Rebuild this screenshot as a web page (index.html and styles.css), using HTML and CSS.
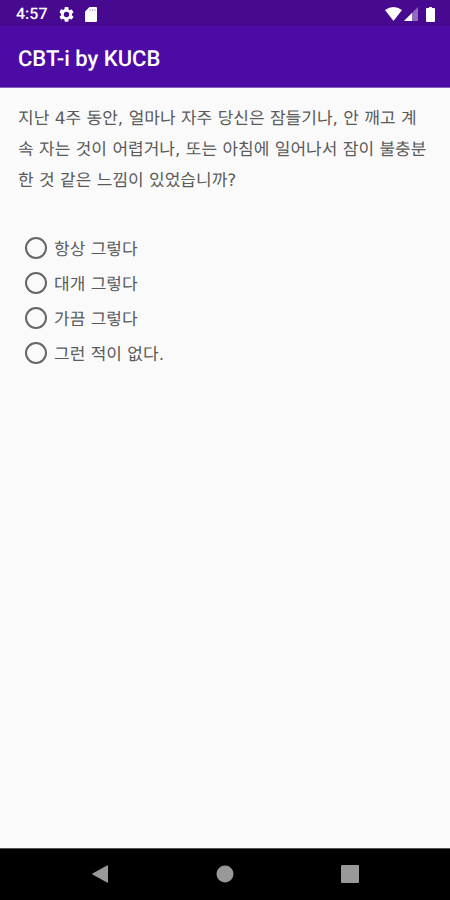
FILE: index.html
```html
<!DOCTYPE html>
<html lang="ko">
<head>
<meta charset="utf-8">
<meta name="viewport" content="width=device-width, initial-scale=1">
<title>CBT-i by KUCB</title>
<link rel="stylesheet" href="styles.css">
</head>
<body>
<div class="status">
  <time class="clock">4:57</time>
  <svg class="gear" viewBox="2 2 20 20" aria-hidden="true"><path d="M19.14 12.94c.04-.3.06-.61.06-.94s-.02-.64-.07-.94l2.03-1.58a.49.49 0 0 0 .12-.61l-1.92-3.32a.49.49 0 0 0-.59-.22l-2.39.96a7 7 0 0 0-1.62-.94l-.36-2.54A.48.48 0 0 0 13.92 2h-3.84a.48.48 0 0 0-.48.41l-.36 2.54c-.59.24-1.13.57-1.62.94l-2.39-.96a.48.48 0 0 0-.59.22L2.74 8.87a.48.48 0 0 0 .12.61l2.03 1.58a6 6 0 0 0 0 1.88l-2.03 1.58a.49.49 0 0 0-.12.61l1.92 3.32c.12.22.37.29.59.22l2.39-.96c.5.38 1.03.7 1.62.94l.36 2.54c.05.24.24.41.48.41h3.84c.24 0 .44-.17.47-.41l.36-2.54a7 7 0 0 0 1.62-.94l2.39.96c.22.08.47 0 .59-.22l1.92-3.32a.49.49 0 0 0-.12-.61zM12 15.6a3.6 3.6 0 1 1 0-7.2 3.6 3.6 0 0 1 0 7.2z"/></svg>
  <svg class="card" viewBox="0 0 12 15" aria-hidden="true"><path d="M4.500 0H11a1 1 0 0 1 1 1v13a1 1 0 0 1-1 1H1a1 1 0 0 1-1-1V4.500z"/><path class="slots" d="M5 2v2M7.500 2v2M10 2v2"/></svg>
  <span class="signals">
    <svg class="wifi" viewBox="0 0 17 14" aria-hidden="true"><path d="M0 3Q8.500-3 17 3L8.500 14z"/></svg>
    <svg class="cell" viewBox="0 0 14 14" aria-hidden="true"><path class="weak" d="M14 0v14H0z"/><path d="M8 6v8H0z"/></svg>
    <svg class="battery" viewBox="0 0 9 15" aria-hidden="true"><path d="M3 0h3v1h2a1 1 0 0 1 1 1V14a1 1 0 0 1-1 1H1a1 1 0 0 1-1-1V2a1 1 0 0 1 1-1h2z"/></svg>
  </span>
</div>
<header class="app-bar"><h1>CBT-i by KUCB</h1></header>
<main>
  <form>
    <fieldset>
      <legend>지난 4주 동안, 얼마나 자주 당신은 잠들기나, 안 깨고 계<br>속 자는 것이 어렵거나, 또는 아침에 일어나서 잠이 불충분<br>한 것 같은 느낌이 있었습니까?</legend>
      <div class="options">
        <label><input type="radio" name="frequency" value="always">항상 그렇다</label>
        <label><input type="radio" name="frequency" value="usually">대개 그렇다</label>
        <label><input type="radio" name="frequency" value="sometimes">가끔 그렇다</label>
        <label><input type="radio" name="frequency" value="never">그런 적이 없다.</label>
      </div>
    </fieldset>
  </form>
</main>
<nav class="system-nav">
  <button type="button" aria-label="뒤로"><svg viewBox="0 0 18 18" aria-hidden="true"><path d="M16 0.500q1-.5 1 .5v16q0 1-1 .5L1.500 9.500q-1-.5 0-1z"/></svg></button>
  <button type="button" aria-label="홈"><svg viewBox="0 0 18 18" aria-hidden="true"><circle cx="9" cy="9" r="8.500"/></svg></button>
  <button type="button" aria-label="최근 앱"><svg viewBox="0 0 18 18" aria-hidden="true"><rect width="18" height="18" rx="1"/></svg></button>
</nav>
</body>
</html>
```
FILE: styles.css
```css
* { box-sizing: border-box; }

body {
  margin: 0;
  min-height: 100vh;
  display: flex;
  flex-direction: column;
  background: #fafafa;
  color: #5a5a5a;
  font-family: Roboto, "Noto Sans CJK KR", sans-serif;
  text-rendering: geometricPrecision;
}

.status {
  display: flex;
  align-items: center;
  height: 26px;
  padding: 2px 15px 0 16px;
  background: #46098f;
  color: #fff;
}

.status svg { fill: currentColor; display: block; }

.clock { font-size: 16px; font-weight: 500; line-height: 20px; }
.gear { width: 15px; height: 15px; margin-left: 11px; }
.card { width: 12px; height: 15px; margin-left: 11px; }
.status .slots { stroke: #b79cd8; fill: none; }
.signals { display: flex; align-items: center; margin-left: auto; }
.wifi { width: 17px; height: 14px; }
.cell { width: 14px; height: 14px; margin-left: 2px; }
.weak { opacity: 0.4; }
.battery { width: 9px; height: 15px; margin-left: 8px; }

.app-bar {
  display: flex;
  align-items: center;
  height: 62px;
  padding: 6px 18px 0;
  background: #4d0ba5;
  border-bottom: 1px solid #8664b8;
  color: #fff;
}

h1 { margin: 0; font-size: 22px; font-weight: 500; line-height: 28px; }

main {
  flex: 1;
  padding: 16px 12px 24px 18px;
  font-family: "DejaVu Sans", "Noto Sans CJK KR", sans-serif;
  font-size: 17px;
}

fieldset { margin: 0; padding: 0; border: 0; min-width: 0; }
legend { padding: 0; line-height: 31px; }
.options { padding: 33px 7px 0; }

label {
  display: flex;
  align-items: center;
  gap: 7px;
  height: 35px;
}

input {
  appearance: none;
  flex: none;
  width: 22px;
  height: 22px;
  margin: 0;
  border: 2px solid #666;
  border-radius: 50%;
}

input:checked { background: radial-gradient(#4d0ba5 45%, transparent 50%); }

.system-nav {
  display: flex;
  justify-content: center;
  gap: 81px;
  height: 52px;
  padding-bottom: 2px;
  background: #000;
  border-top: 1px solid #555;
}

.system-nav button {
  display: flex;
  align-items: center;
  justify-content: center;
  width: 44px;
  padding: 0;
  border: 0;
  background: none;
}

.system-nav svg { width: 18px; height: 18px; fill: #999; }
```
